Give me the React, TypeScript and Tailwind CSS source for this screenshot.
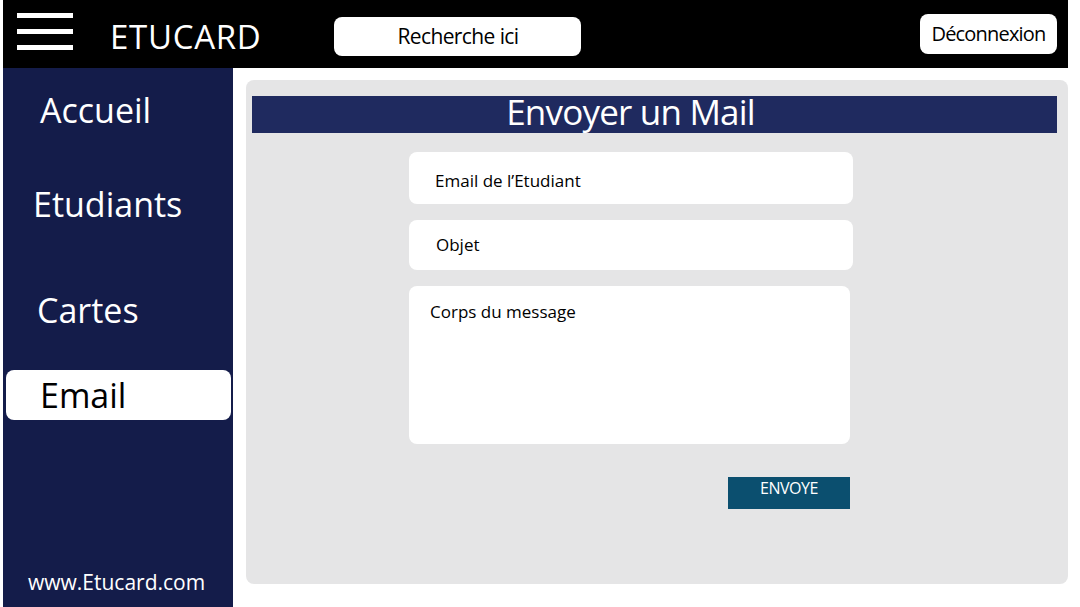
import React from 'react';

const NAV = [
  { label: 'Accueil', cls: 'h-[102px] pl-[37px] pt-[22px]' },
  { label: 'Etudiants', cls: 'h-[104px] pl-[30px] pt-[14px]' },
  { label: 'Cartes', cls: 'h-[90px] pl-[34px] pt-[16px]' },
];

const Sidebar: React.FC = () => (
  <aside className="w-[230px] bg-[#141c4a] flex flex-col text-white">
    {NAV.map((item) => (
      <div key={item.label} className={`${item.cls} text-[34px] leading-[40px]`}>
        {item.label}
      </div>
    ))}
    {/* élément actif */}
    <div className="ml-[3px] mr-[2px] mt-[6px] h-[50px] rounded-lg bg-white text-black text-[34px] leading-[50px] pl-[34px]">
      Email
    </div>
    <div className="mt-auto pb-[12px] pl-[25px] text-[21px] leading-[26px]">www.Etucard.com</div>
  </aside>
);

const Field: React.FC<{ label: string; cls: string }> = ({ label, cls }) => (
  <div className={`bg-white rounded-lg text-[17px] text-black ${cls}`}>{label}</div>
);

export default function App() {
  return (
    <div
      className="w-[1080px] h-[607px] bg-white flex flex-col pl-[3px] pr-[12px] overflow-hidden"
      style={{ fontFamily: '"Open Sans", "Noto Sans", sans-serif' }}
    >
      {/* barre du haut */}
      <header className="h-[68px] bg-black flex items-center shrink-0">
        <div className="ml-[14px] w-[56px] flex flex-col gap-[11px] -mt-[5px]">
          <span className="block h-[5px] bg-white" />
          <span className="block h-[5px] bg-white" />
          <span className="block h-[5px] bg-white" />
        </div>
        <div className="ml-[37px] text-white text-[33px] tracking-[0.7px] leading-none mt-[4px]">ETUCARD</div>
        <div className="ml-[73px] w-[247px] h-[39px] mt-[5px] bg-white rounded-lg flex items-center justify-center text-[21px] text-black tracking-[-0.6px]">
          Recherche ici
        </div>
        <div className="ml-auto mr-[11px] w-[137px] h-[40px] bg-white rounded-lg flex items-center justify-center text-[20px] text-black tracking-[-0.8px]">
          Déconnexion
        </div>
      </header>

      <div className="flex flex-1 min-h-0">
        <Sidebar />
        <main className="flex-1 pl-[13px] pt-[12px] pb-[23px]">
          <section className="h-full bg-[#e5e5e6] rounded-lg pt-[16px] pl-[6px] pr-[11px] flex flex-col">
            <h1 className="h-[37px] bg-[#1f2a5f] text-white text-[35px] leading-[31px] text-center tracking-[-0.8px] pl-[2px] pr-[50px]">
              Envoyer un Mail
            </h1>
            <div className="ml-[157px] w-[444px] mt-[19px] flex flex-col gap-[16px]">
              <Field label="Email de l’Etudiant" cls="h-[52px] pl-[26px] pt-[16px] leading-[26px]" />
              <Field label="Objet" cls="h-[50px] pl-[27px] leading-[50px]" />
              <Field label="Corps du message" cls="h-[158px] w-[441px] pl-[21px] pt-[14px] leading-[24px]" />
            </div>
            <div className="ml-[476px] mt-[33px] w-[122px] h-[32px] bg-[#0b4f6f] text-white text-[16px] text-center leading-[22px] tracking-[-0.5px]">
              ENVOYE
            </div>
          </section>
        </main>
      </div>
    </div>
  );
}
